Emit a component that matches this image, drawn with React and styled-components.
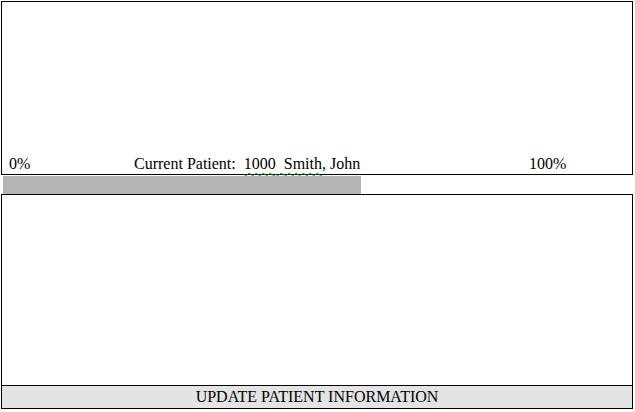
import React from 'react';
import styled, { createGlobalStyle } from 'styled-components';

const GlobalStyle = createGlobalStyle`
  html, body {
    margin: 0;
    padding: 0;
    background: #ffffff;
  }
  body {
    font-family: "Liberation Serif", "Times New Roman", serif;
    font-size: 16px;
    color: #000000;
  }
`;

// Outer frame for the whole form
const Page = styled.div`
  display: flex;
  flex-direction: column;
  width: 632px;
  padding: 1px 0 0 1px;
`;

const StatusPanel = styled.div`
  height: 174px;
  box-sizing: border-box;
  border: 1px solid #000;
  display: flex;
  flex-direction: column;
  justify-content: flex-end;
`;

const StatusRow = styled.div`
  display: grid;
  grid-template-columns: 125px 395px auto;
  padding: 0 0 1px 7px;
  line-height: 18px;
  white-space: pre;
`;

const Flagged = styled.span`
  text-decoration: underline wavy #2e9d2e;
  text-decoration-thickness: 1px;
  text-underline-offset: 3px;
`;

const ProgressTrack = styled.div`
  height: 19px;
  box-sizing: border-box;
  padding: 1px 2px 0 2px;
`;

const ProgressFill = styled.div`
  height: 18px;
  background: #b4b4b4;
`;

const DetailPanel = styled.div`
  height: 215px;
  box-sizing: border-box;
  border: 1px solid #000;
  display: flex;
  flex-direction: column;
  justify-content: flex-end;
`;

const UpdateButton = styled.button`
  height: 23px;
  margin: 0;
  padding: 0;
  border: none;
  border-top: 1px solid #000;
  background: #e4e4e4;
  font-family: "Liberation Serif", "Times New Roman", serif;
  font-size: 16px;
  line-height: 22px;
  color: #000;
  text-align: center;
  cursor: pointer;
`;

const App = () => {
  const progress = 358 / 628;
  const patient = { id: '1000', last: 'Smith', first: 'John' };

  return (
    <>
      <GlobalStyle />
      <Page>
        <StatusPanel>
          <StatusRow>
            <span>0%</span>
            <span>
              Current Patient:  <Flagged>{patient.id}  {patient.last}</Flagged>, {patient.first}
            </span>
            <span>100%</span>
          </StatusRow>
        </StatusPanel>
        <ProgressTrack>
          <ProgressFill style={{ width: `${progress * 100}%` }} />
        </ProgressTrack>
        <DetailPanel>
          <UpdateButton>UPDATE PATIENT INFORMATION</UpdateButton>
        </DetailPanel>
      </Page>
    </>
  );
};

export default App;
